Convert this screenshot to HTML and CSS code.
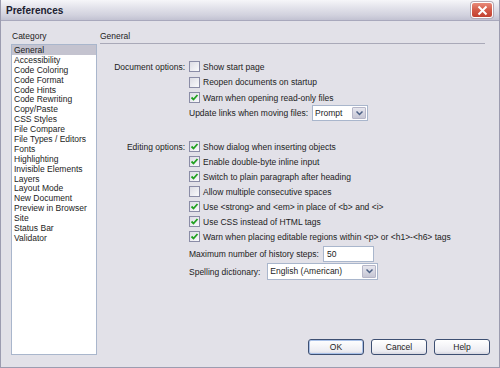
FILE: index.html
```html
<!DOCTYPE html>
<html lang="en">
<head>
    <meta charset="UTF-8">
    <title>Preferences</title>
    <link rel="stylesheet" href="styles.css">
</head>
<body>
    <div class="window">
        <div class="titlebar">
            <span class="title">Preferences</span>
            <span class="close">
                <svg width="11" height="11" viewBox="0 0 11 11"><path d="M1.5 1.5 L9.5 9.5 M9.5 1.5 L1.5 9.5" stroke="#fff" stroke-width="2"/></svg>
            </span>
        </div>
        <div class="content">
            <div class="sidebar">
                <div class="caption">Category</div>
                <ul class="list">
                    <li class="selected">General</li>
                    <li>Accessibility</li>
                    <li>Code Coloring</li>
                    <li>Code Format</li>
                    <li>Code Hints</li>
                    <li>Code Rewriting</li>
                    <li>Copy/Paste</li>
                    <li>CSS Styles</li>
                    <li>File Compare</li>
                    <li>File Types / Editors</li>
                    <li>Fonts</li>
                    <li>Highlighting</li>
                    <li>Invisible Elements</li>
                    <li>Layers</li>
                    <li>Layout Mode</li>
                    <li>New Document</li>
                    <li>Preview in Browser</li>
                    <li>Site</li>
                    <li>Status Bar</li>
                    <li>Validator</li>
                </ul>
            </div>
            <div class="main">
                <div class="heading">General</div>
                <div class="form">
                    <div class="row h15"><span class="label">Document options:</span><span class="cb"></span>Show start page</div>
                    <div class="row h16"><span class="label"></span><span class="cb"></span>Reopen documents on startup</div>
                    <div class="row h15"><span class="label"></span><span class="cb on"><svg width="9" height="9" viewBox="0 0 9 9"><path d="M1.5 4.5 L3.5 6.5 L7.5 2" stroke="#21a121" stroke-width="1.8" fill="none"/></svg></span>Warn when opening read-only files</div>
                    <div class="row h16"><span class="label"></span>Update links when moving files:<span class="select prompt"><span class="value">Prompt</span><span class="arrow"><svg width="7" height="5" viewBox="0 0 7 5"><path d="M0.5 0.5 L3.5 3.5 L6.5 0.5" stroke="#4d6185" stroke-width="1.5" fill="none"/></svg></span></span></div>

                    <div class="row h15 gap"><span class="label">Editing options:</span><span class="cb on"><svg width="9" height="9" viewBox="0 0 9 9"><path d="M1.5 4.5 L3.5 6.5 L7.5 2" stroke="#21a121" stroke-width="1.8" fill="none"/></svg></span>Show dialog when inserting objects</div>
                    <div class="row h15"><span class="label"></span><span class="cb on"><svg width="9" height="9" viewBox="0 0 9 9"><path d="M1.5 4.5 L3.5 6.5 L7.5 2" stroke="#21a121" stroke-width="1.8" fill="none"/></svg></span>Enable double-byte inline input</div>
                    <div class="row h15"><span class="label"></span><span class="cb on"><svg width="9" height="9" viewBox="0 0 9 9"><path d="M1.5 4.5 L3.5 6.5 L7.5 2" stroke="#21a121" stroke-width="1.8" fill="none"/></svg></span>Switch to plain paragraph after heading</div>
                    <div class="row h15"><span class="label"></span><span class="cb"></span>Allow multiple consecutive spaces</div>
                    <div class="row h15"><span class="label"></span><span class="cb on"><svg width="9" height="9" viewBox="0 0 9 9"><path d="M1.5 4.5 L3.5 6.5 L7.5 2" stroke="#21a121" stroke-width="1.8" fill="none"/></svg></span>Use &lt;strong&gt; and &lt;em&gt; in place of &lt;b&gt; and &lt;i&gt;</div>
                    <div class="row h15"><span class="label"></span><span class="cb on"><svg width="9" height="9" viewBox="0 0 9 9"><path d="M1.5 4.5 L3.5 6.5 L7.5 2" stroke="#21a121" stroke-width="1.8" fill="none"/></svg></span>Use CSS instead of HTML tags</div>
                    <div class="row h15"><span class="label"></span><span class="cb on"><svg width="9" height="9" viewBox="0 0 9 9"><path d="M1.5 4.5 L3.5 6.5 L7.5 2" stroke="#21a121" stroke-width="1.8" fill="none"/></svg></span>Warn when placing editable regions within &lt;p&gt; or &lt;h1&gt;-&lt;h6&gt; tags</div>

                    <div class="row history"><span class="label"></span>Maximum number of history steps:<span class="input">50</span></div>
                    <div class="row spelling"><span class="label"></span>Spelling dictionary:<span class="select dict"><span class="value">English (American)</span><span class="arrow"><svg width="7" height="5" viewBox="0 0 7 5"><path d="M0.5 0.5 L3.5 3.5 L6.5 0.5" stroke="#4d6185" stroke-width="1.5" fill="none"/></svg></span></span></div>
                </div>
                <div class="buttons">
                    <span class="button default">OK</span>
                    <span class="button">Cancel</span>
                    <span class="button">Help</span>
                </div>
            </div>
        </div>
    </div>
</body>
</html>
```

FILE: styles.css
```css
body {
    margin: 0;
    font-family: "Liberation Sans", Arial, sans-serif;
    font-size: 8.5px;
    color: #1c1c1c;
}
.window {
    width: 500px;
    height: 368px;
    box-sizing: border-box;
    background: #e2e1e8;
    border: 1px solid #9c9cb0;
    border-top: none;
    display: flex;
    flex-direction: column;
}
.titlebar {
    height: 21px;
    box-sizing: border-box;
    background: linear-gradient(#f6f6f9, #e4e4ec 35%, #d2d2de 75%, #c2c2d2);
    border-bottom: 1px solid #a8a8bc;
    display: flex;
    align-items: center;
    justify-content: space-between;
    padding: 0 6px 0 5px;
}
.title {
    font-weight: bold;
    font-size: 10px;
    color: #202030;
}
.close {
    width: 22px;
    height: 16px;
    box-sizing: border-box;
    border: 1px solid #fff;
    border-radius: 3px;
    background: linear-gradient(#e88a7a, #d35a48 50%, #c2402f);
    box-shadow: 0 0 0 1px #b4a8b4;
    display: flex;
    align-items: center;
    justify-content: center;
}
.content {
    flex: 1;
    display: flex;
    padding: 10px 9px 12px 10px;
}
.sidebar {
    width: 86px;
    display: flex;
    flex-direction: column;
}
.caption {
    height: 13px;
    line-height: 10px;
    padding-left: 1px;
}
.list {
    list-style: none;
    margin: 0;
    padding: 0;
    flex: 1;
    background: #fff;
    border: 1px solid #a9b6cc;
}
.list li {
    height: 9.9px;
    line-height: 10px;
    padding-left: 2px;
    white-space: nowrap;
}
.list li.selected {
    background: #c4c3cf;
}
.main {
    flex: 1;
    margin-left: 3px;
    display: flex;
    flex-direction: column;
}
.heading {
    height: 12px;
    line-height: 10px;
    border-bottom: 1px solid #a9a9b8;
    margin-right: 5px;
}
.form {
    margin-top: 15px;
}
.row {
    display: flex;
    align-items: center;
    white-space: nowrap;
}
.h15 { height: 15px; }
.h16 { height: 16px; }
.gap { margin-top: 18px; }
.label {
    width: 85px;
    text-align: right;
    padding-right: 4px;
    flex-shrink: 0;
}
.cb {
    width: 11px;
    height: 11px;
    box-sizing: border-box;
    border: 1px solid #8a8ca6;
    background: linear-gradient(135deg, #dcdce4, #fafafc);
    margin-right: 3px;
    display: flex;
    align-items: center;
    justify-content: center;
}
.select {
    display: flex;
    height: 16px;
    box-sizing: border-box;
    border: 1px solid #a9b6cc;
    background: #fff;
}
.select .value {
    flex: 1;
    padding-left: 2px;
    line-height: 14px;
}
.select .arrow {
    width: 12px;
    margin: 1px;
    background: linear-gradient(#e6e6ee, #c6c6d4);
    border: 1px solid #b6b6c8;
    border-radius: 1px;
    display: flex;
    align-items: center;
    justify-content: center;
}
.prompt {
    width: 56px;
    margin-left: 4px;
}
.history {
    height: 16px;
    margin-top: 2px;
}
.input {
    width: 51px;
    height: 16px;
    box-sizing: border-box;
    border: 1px solid #a9b6cc;
    background: #fff;
    margin-left: 4px;
    padding-left: 3px;
    line-height: 14px;
}
.spelling {
    height: 17px;
    margin-top: 1px;
}
.dict {
    width: 111px;
    height: 17px;
    margin-left: 7px;
}
.buttons {
    margin-top: auto;
    display: flex;
    justify-content: flex-end;
    gap: 7px;
}
.button {
    width: 56px;
    height: 16px;
    box-sizing: border-box;
    border: 1px solid #3d4f72;
    border-radius: 3px;
    background: linear-gradient(#ffffff, #ececf2 80%, #d6d6e0);
    display: flex;
    align-items: center;
    justify-content: center;
}
.button.default {
    box-shadow: inset 0 0 0 1px #a8c0e8;
}
```
